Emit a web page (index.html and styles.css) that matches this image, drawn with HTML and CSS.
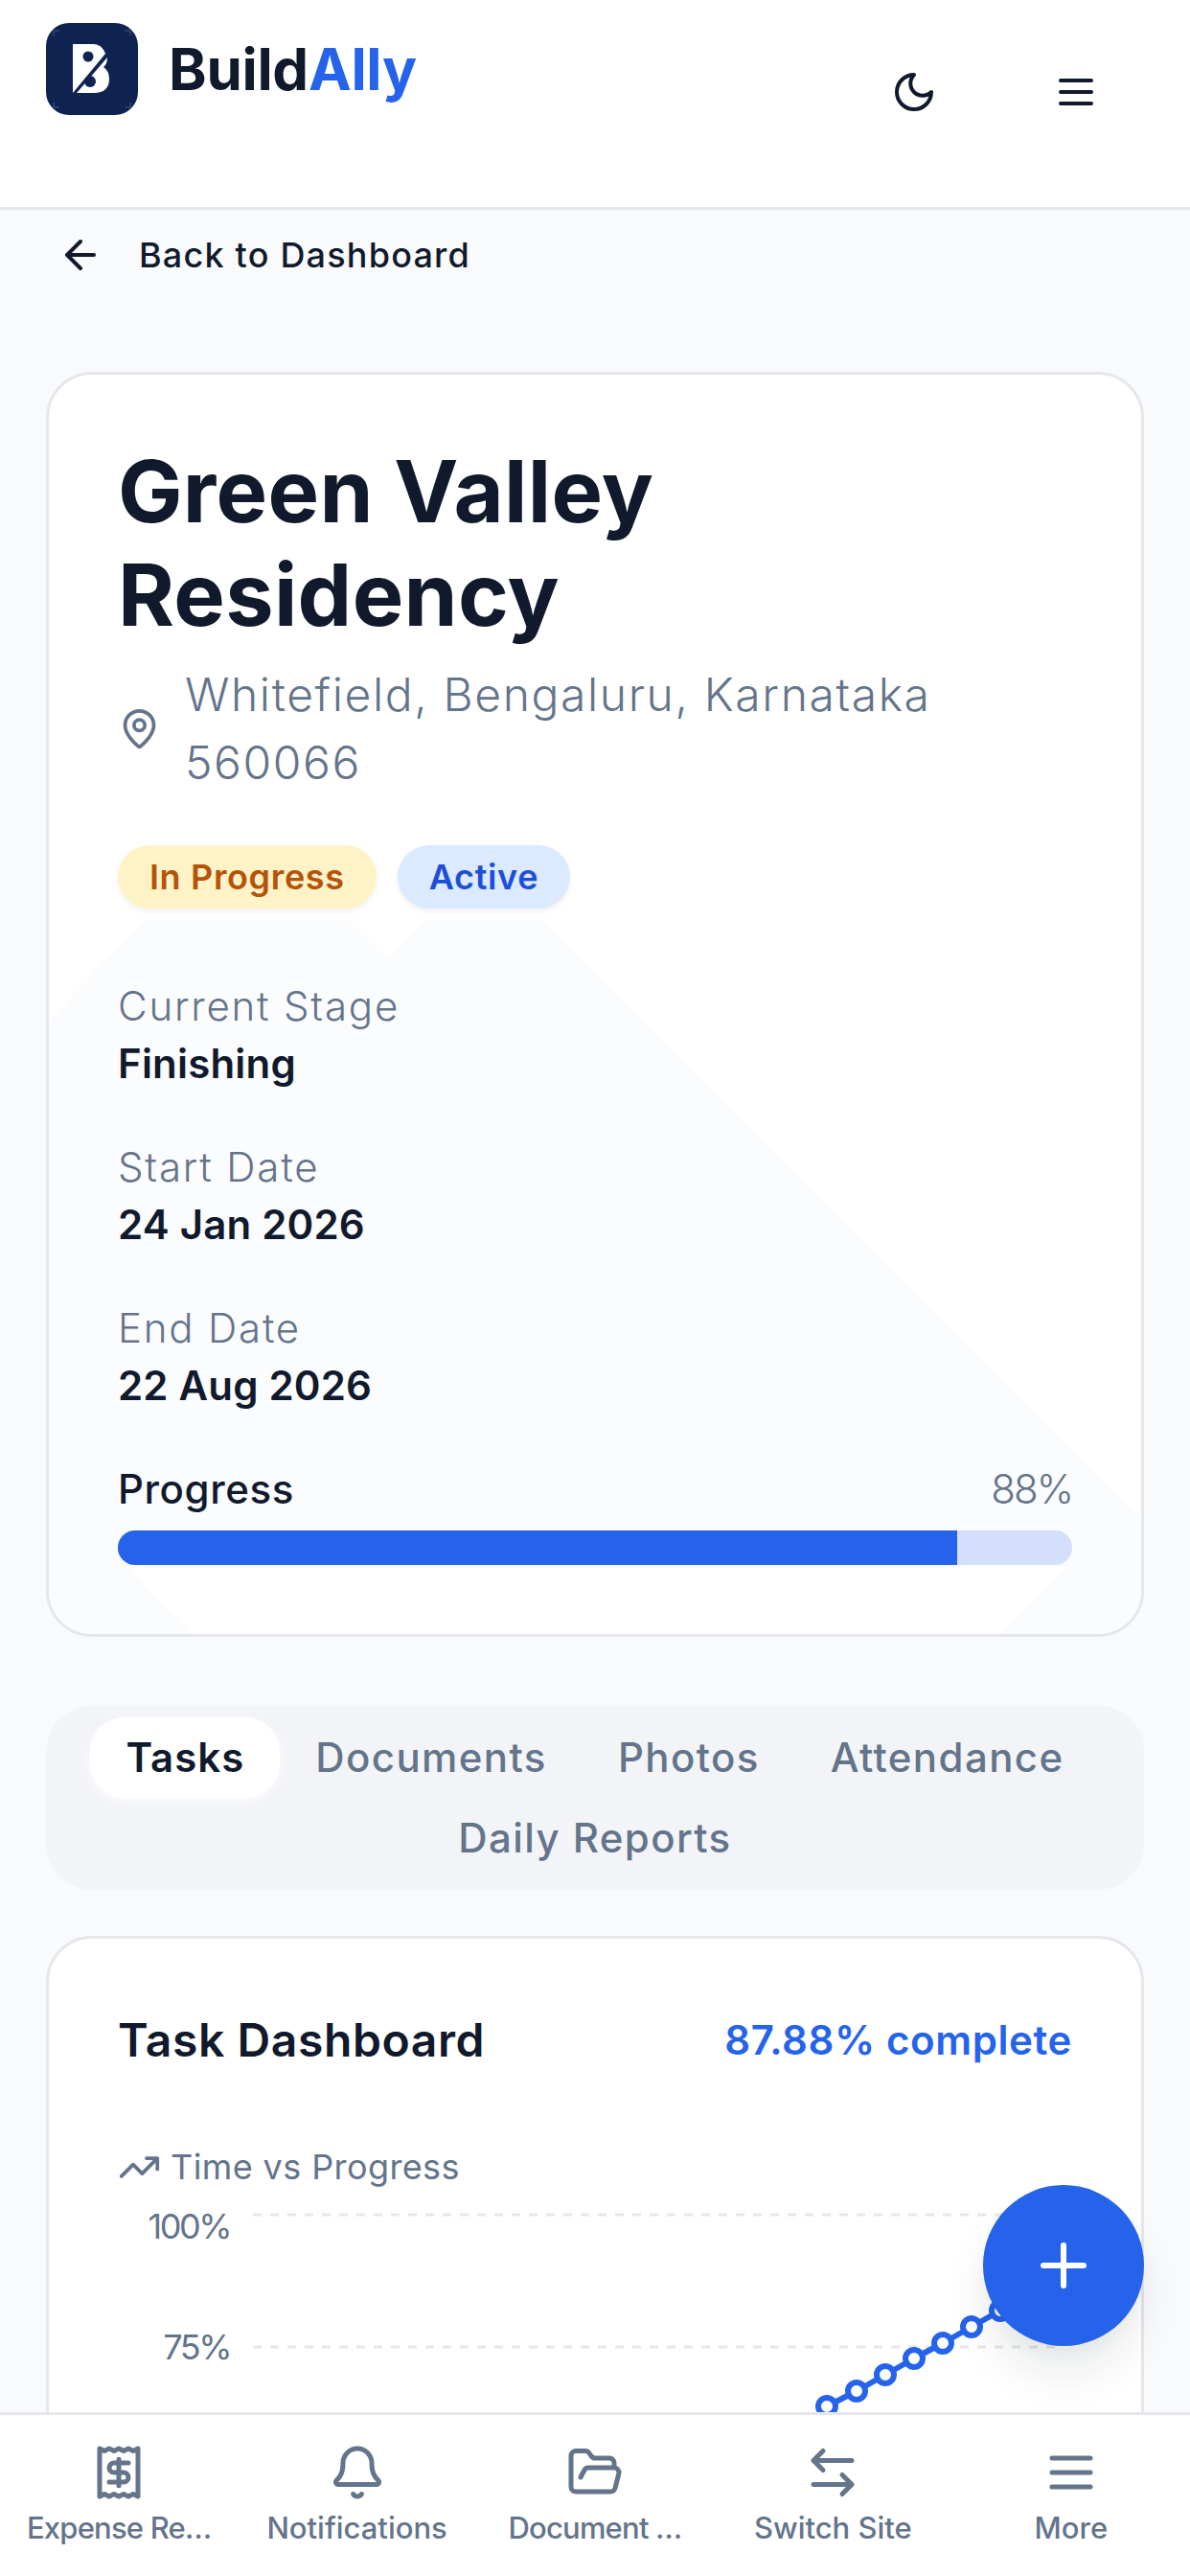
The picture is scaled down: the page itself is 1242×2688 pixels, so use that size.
FILE: index.html
```html
<!DOCTYPE html>
<html lang="en">
<head>
    <meta charset="UTF-8">
    <meta name="viewport" content="width=device-width, initial-scale=1.0">
    <title>Green Valley Residency - BuildAlly</title>
    <link rel="stylesheet" href="styles.css">
</head>
<body>
    <header class="topbar">
        <div class="brand">
            <svg class="brand-logo" viewBox="0 0 96 96">
                <rect width="96" height="96" rx="24" fill="#0f2350"/>
                <path d="M8 13V8h5M83 8h5v5M88 83v5h-5M13 88H8v-5" fill="none" stroke="#46567c" stroke-width="1"/>
                <path d="M28 22H50Q58 22 62 32L28 73Z" fill="#fff"/>
                <path d="M64 36Q64 43 60 46Q66 50 66 58Q66 73 50 73H32Z" fill="#fff"/>
                <circle cx="44" cy="35" r="5.5" fill="#0f2350"/>
                <circle cx="46" cy="61" r="6" fill="#0f2350"/>
            </svg>
            <span class="brand-name">Build<span class="brand-accent">Ally</span></span>
        </div>
        <div class="topbar-actions">
            <svg class="topbar-icon" viewBox="0 0 24 24"><path d="M12 3a6 6 0 0 0 9 9 9 9 0 1 1-9-9Z"/></svg>
            <svg class="topbar-icon" viewBox="0 0 24 24"><path d="M4 6h16M4 12h16M4 18h16"/></svg>
        </div>
    </header>

    <main class="page">
        <a class="back-link">
            <svg class="back-icon" viewBox="0 0 24 24"><path d="m12 19-7-7 7-7M19 12H5"/></svg>
            <span>Back to Dashboard</span>
        </a>

        <section class="card site-card">
            <svg class="site-watermark" viewBox="0 0 1140 1312" preserveAspectRatio="none">
                <path d="M-3 677 100 567H311L353 608 391 567H517L1143 1192V1315H989L1062 1242H85L150 1315H-3Z"/>
            </svg>
            <div class="site-body">
                <h1 class="site-title">Green Valley Residency</h1>
                <div class="site-address">
                    <svg class="pin-icon" viewBox="0 0 24 24"><path d="M20 10c0 4.993-5.539 10.193-7.399 11.799a1 1 0 0 1-1.202 0C9.539 20.193 4 14.993 4 10a8 8 0 0 1 16 0"/><circle cx="12" cy="10" r="3"/></svg>
                    <span class="site-address-text">Whitefield, Bengaluru, Karnataka 560066</span>
                </div>
                <div class="badges">
                    <span class="badge badge-yellow">In Progress</span>
                    <span class="badge badge-blue">Active</span>
                </div>
                <div class="field">
                    <div class="field-label">Current Stage</div>
                    <div class="field-value">Finishing</div>
                </div>
                <div class="field">
                    <div class="field-label">Start Date</div>
                    <div class="field-value">24 Jan 2026</div>
                </div>
                <div class="field">
                    <div class="field-label">End Date</div>
                    <div class="field-value">22 Aug 2026</div>
                </div>
                <div class="progress-head">
                    <span class="progress-name">Progress</span>
                    <span class="progress-value">88%</span>
                </div>
                <div class="progress-track"><div class="progress-fill" style="width: 88%"></div></div>
            </div>
        </section>

        <nav class="tabs">
            <span class="tab tab-active">Tasks</span>
            <span class="tab">Documents</span>
            <span class="tab">Photos</span>
            <span class="tab">Attendance</span>
            <span class="tab">Daily Reports</span>
        </nav>

        <section class="card dash-card">
            <div class="dash-head">
                <h2 class="dash-title">Task Dashboard</h2>
                <span class="dash-percent">87.88% complete</span>
            </div>
            <div class="chart-title">
                <svg class="chart-title-icon" viewBox="0 0 24 24"><path d="M16 7h6v6M22 7l-8.5 8.5-5-5L2 17"/></svg>
                <span>Time vs Progress</span>
            </div>
            <svg class="chart" viewBox="0 0 996 300">
                <line class="chart-grid" x1="141" y1="23" x2="979" y2="23"/>
                <line class="chart-grid" x1="141" y1="161" x2="979" y2="161"/>
                <text class="chart-label" x="117" y="48" text-anchor="end">100%</text>
                <text class="chart-label" x="117" y="174" text-anchor="end">75%</text>
                <polyline class="chart-line" points="740,223 771,207 801,190 831,173 861,157 891,140 921,123 951,106"/>
                <circle class="chart-dot" cx="740" cy="223" r="9"/>
                <circle class="chart-dot" cx="771" cy="207" r="9"/>
                <circle class="chart-dot" cx="801" cy="190" r="9"/>
                <circle class="chart-dot" cx="831" cy="173" r="9"/>
                <circle class="chart-dot" cx="861" cy="157" r="9"/>
                <circle class="chart-dot" cx="891" cy="140" r="9"/>
                <circle class="chart-dot" cx="921" cy="123" r="9"/>
            </svg>
        </section>

        <button class="fab">
            <svg viewBox="0 0 24 24"><path d="M5 12h14M12 5v14"/></svg>
        </button>
    </main>

    <footer class="bottom-nav">
        <div class="nav-item">
            <svg class="nav-icon" viewBox="0 0 24 24"><path d="M4 2v20l2-1 2 1 2-1 2 1 2-1 2 1 2-1 2 1V2l-2 1-2-1-2 1-2-1-2 1-2-1-2 1Z"/><path d="M16 8h-6a2 2 0 1 0 0 4h4a2 2 0 1 1 0 4H8"/><path d="M12 17.5v-11"/></svg>
            <span class="nav-label nav-label-cut">Expense Re…</span>
        </div>
        <div class="nav-item">
            <svg class="nav-icon" viewBox="0 0 24 24"><path d="M10.268 21a2 2 0 0 0 3.464 0"/><path d="M3.262 15.326A1 1 0 0 0 4 17h16a1 1 0 0 0 .74-1.673C19.41 13.956 18 12.499 18 8A6 6 0 0 0 6 8c0 4.499-1.411 5.956-2.738 7.326"/></svg>
            <span class="nav-label">Notifications</span>
        </div>
        <div class="nav-item">
            <svg class="nav-icon" viewBox="0 0 24 24"><path d="m6 14 1.5-2.9A2 2 0 0 1 9.24 10H20a2 2 0 0 1 1.94 2.5l-1.54 6a2 2 0 0 1-1.94 1.5H4a2 2 0 0 1-2-2V5a2 2 0 0 1 2-2h3.9a2 2 0 0 1 1.69.9l.81 1.2a2 2 0 0 0 1.67.9H18a2 2 0 0 1 2 2v2"/></svg>
            <span class="nav-label nav-label-cut">Document …</span>
        </div>
        <div class="nav-item">
            <svg class="nav-icon" viewBox="0 0 24 24"><path d="M8 3 4 7l4 4M4 7h16M16 21l4-4-4-4M20 17H4"/></svg>
            <span class="nav-label">Switch Site</span>
        </div>
        <div class="nav-item">
            <svg class="nav-icon" viewBox="0 0 24 24"><path d="M4 6h16M4 12h16M4 18h16"/></svg>
            <span class="nav-label">More</span>
        </div>
    </footer>
</body>
</html>
```

FILE: styles.css
```css
* {
    box-sizing: border-box;
}
body {
    font-family: Inter, "Noto Sans", sans-serif;
    margin: 0;
    height: 100vh;
    display: flex;
    flex-direction: column;
    overflow: hidden;
    background: #f9fafc;
    color: #111a2c;
}
svg {
    display: block;
    fill: none;
    stroke-linecap: round;
    stroke-linejoin: round;
}

/* top bar */
.topbar {
    flex-shrink: 0;
    height: 219px;
    background: white;
    border-bottom: 3px solid #e5e7eb;
    display: flex;
    justify-content: space-between;
    align-items: flex-start;
    padding: 24px 95px 0 48px;
}
.brand {
    display: flex;
    align-items: center;
    gap: 32px;
}
.brand-logo {
    width: 96px;
    height: 96px;
}
.brand-name {
    font-size: 60px;
    font-weight: 700;
    letter-spacing: -0.3px;
}
.brand-accent {
    color: #2563eb;
}
.topbar-actions {
    display: flex;
    gap: 121px;
    margin-top: 48px;
}
.topbar-icon {
    width: 48px;
    height: 48px;
    stroke: #111a2c;
    stroke-width: 2;
}

/* page */
.page {
    flex: 1;
    min-height: 0;
    overflow: hidden;
    position: relative;
    padding: 23px 48px 0;
}
.back-link {
    display: flex;
    align-items: center;
    gap: 37px;
    padding-left: 12px;
    height: 48px;
    margin-bottom: 98px;
    font-size: 36px;
    font-weight: 500;
    letter-spacing: 1.2px;
}
.back-icon {
    width: 48px;
    height: 48px;
    stroke: #111a2c;
    stroke-width: 2;
}
.card {
    background: white;
    border: 3px solid #e5e7eb;
    border-radius: 48px;
    position: relative;
}
.site-card {
    overflow: hidden;
}
.site-watermark {
    position: absolute;
    top: 0;
    left: 0;
    width: 100%;
    height: 100%;
    fill: #fbfcfe;
}
.site-body {
    position: relative;
    padding: 68px 72px 72px;
}
.site-title {
    margin: 0;
    max-width: 800px;
    font-size: 90px;
    line-height: 108px;
    font-weight: 700;
    letter-spacing: 0.3px;
}
.site-address {
    display: flex;
    align-items: center;
    gap: 25px;
    margin-top: 14px;
    font-size: 48px;
    line-height: 71px;
    font-weight: 300;
    letter-spacing: 1.6px;
    color: #64748b;
}
.site-address-text {
    max-width: 800px;
}
.pin-icon {
    flex-shrink: 0;
    width: 45px;
    height: 45px;
    stroke: #64748b;
    stroke-width: 2;
}
.badges {
    display: flex;
    gap: 22px;
    margin-top: 51px;
    margin-bottom: 72px;
}
.badge {
    height: 66px;
    line-height: 66px;
    padding: 0 33px;
    border-radius: 33px;
    font-size: 36px;
    font-weight: 600;
    letter-spacing: 0.65px;
    box-shadow: 0 3px 6px rgba(0, 0, 0, 0.06);
}
.badge-yellow {
    background: #fef3c7;
    color: #b45309;
}
.badge-blue {
    background: #dbeafe;
    color: #1d4ed8;
}
.field {
    margin-bottom: 48px;
}
.field-label {
    font-size: 42px;
    line-height: 60px;
    font-weight: 300;
    letter-spacing: 1.8px;
    color: #64748b;
}
.field-value {
    font-size: 42px;
    line-height: 60px;
    font-weight: 600;
    letter-spacing: 0.2px;
}
.progress-head {
    display: flex;
    justify-content: space-between;
    font-size: 42px;
    line-height: 60px;
    margin-bottom: 13px;
}
.progress-name {
    font-weight: 500;
    letter-spacing: 0.6px;
}
.progress-value {
    font-weight: 300;
    letter-spacing: -2px;
    color: #64748b;
}
.progress-track {
    height: 36px;
    border-radius: 18px;
    background: #d3dffb;
    overflow: hidden;
}
.progress-fill {
    height: 100%;
    background: #2563eb;
}

/* tabs */
.tabs {
    display: flex;
    flex-wrap: wrap;
    justify-content: center;
    margin: 72px 0 48px;
    padding: 12px;
    background: #f3f4f8;
    border-radius: 48px;
}
.tab {
    height: 84px;
    line-height: 84px;
    padding: 0 37px;
    font-size: 42px;
    font-weight: 500;
    letter-spacing: 1.4px;
    color: #64748b;
    border-radius: 36px;
}
.tab-active {
    background: white;
    color: #111a2c;
    font-weight: 600;
    letter-spacing: 1px;
    box-shadow: 0 3px 9px rgba(255, 255, 255, 0.8);
}

/* task dashboard */
.dash-card {
    height: 900px;
    padding: 69px 72px 0;
}
.dash-head {
    display: flex;
    justify-content: space-between;
    align-items: center;
    height: 72px;
}
.dash-title {
    margin: 0;
    font-size: 48px;
    font-weight: 600;
    letter-spacing: 0.6px;
}
.dash-percent {
    font-size: 42px;
    font-weight: 600;
    letter-spacing: 0.6px;
    color: #2563eb;
}
.chart-title {
    display: flex;
    align-items: center;
    gap: 10px;
    margin-top: 70px;
    height: 54px;
    font-size: 36px;
    letter-spacing: 0.4px;
    color: #64748b;
}
.chart-title-icon {
    width: 45px;
    height: 45px;
    stroke: #64748b;
    stroke-width: 2;
}
.chart {
    width: 996px;
    height: 300px;
}
.chart-grid {
    stroke: #e5e7eb;
    stroke-width: 3;
    stroke-dasharray: 9 9;
    stroke-linecap: butt;
}
.chart-label {
    font-size: 36px;
    letter-spacing: -2.5px;
    fill: #64748b;
}
.chart-line {
    stroke: #2563eb;
    stroke-width: 6;
}
.chart-dot {
    fill: white;
    stroke: #2563eb;
    stroke-width: 6;
}

/* floating button */
.fab {
    position: absolute;
    right: 48px;
    bottom: 69px;
    width: 168px;
    height: 168px;
    padding: 48px;
    border: none;
    border-radius: 50%;
    background: #2563eb;
    box-shadow: 0 30px 45px rgba(15, 23, 42, 0.08), 0 12px 18px rgba(15, 23, 42, 0.03);
}
.fab svg {
    width: 72px;
    height: 72px;
    stroke: white;
    stroke-width: 2;
}

/* bottom nav */
.bottom-nav {
    flex-shrink: 0;
    height: 171px;
    background: white;
    border-top: 3px solid #e5e7eb;
    display: grid;
    grid-template-columns: repeat(5, 1fr);
    padding-top: 30px;
}
.nav-item {
    display: flex;
    flex-direction: column;
    align-items: center;
    color: #64748b;
}
.nav-icon {
    width: 60px;
    height: 60px;
    stroke: #64748b;
    stroke-width: 2;
}
.nav-label {
    margin-top: 4px;
    font-size: 31px;
    line-height: 48px;
    font-weight: 500;
    white-space: nowrap;
}
.nav-label-cut {
    letter-spacing: -0.8px;
}
```
